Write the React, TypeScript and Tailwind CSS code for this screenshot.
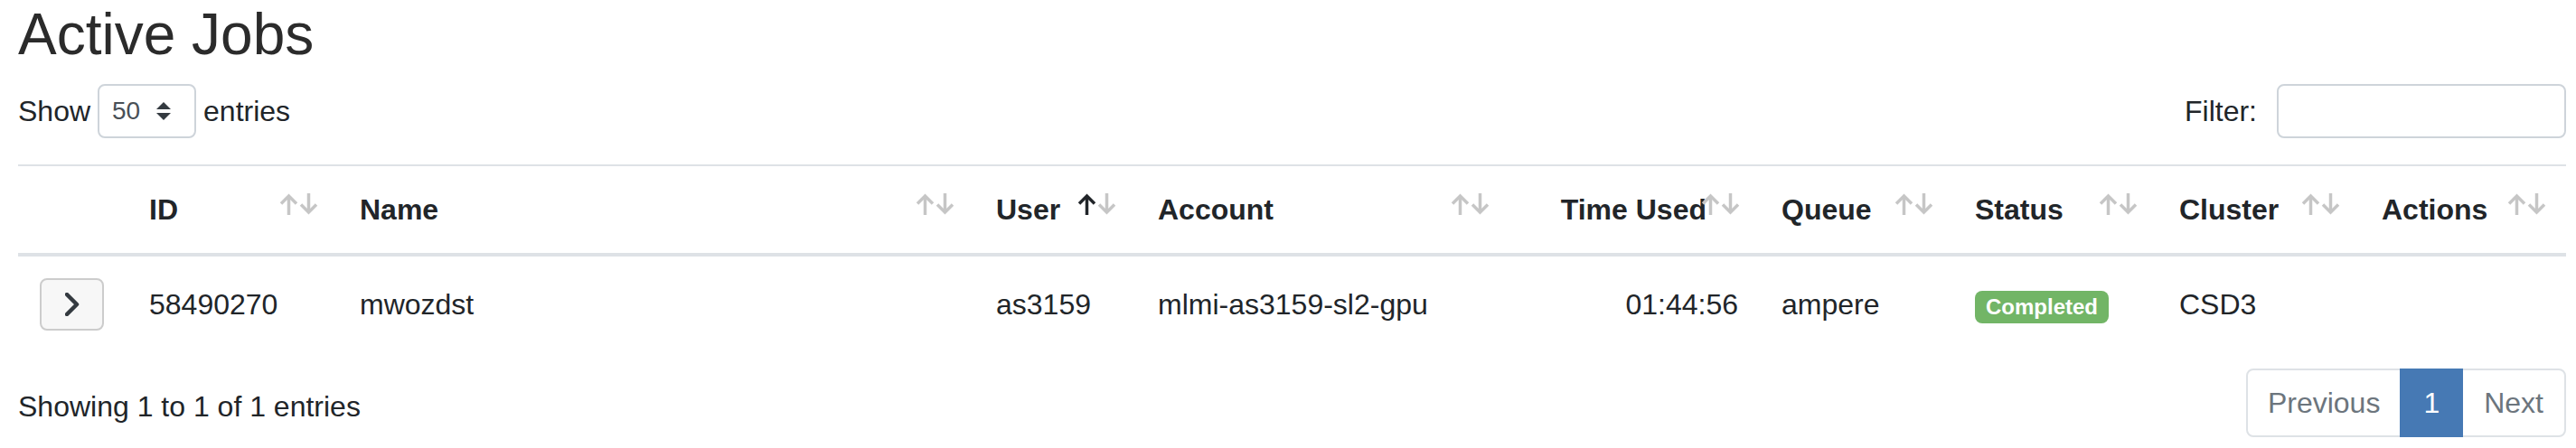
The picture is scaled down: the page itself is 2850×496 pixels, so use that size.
const COLUMNS = [
  { label: '', width: 'w-[121px]', sort: false },
  { label: 'ID', width: 'w-[233px]', sort: true },
  { label: 'Name', width: 'w-[704px]', sort: true },
  { label: 'User', width: 'w-[179px]', sort: true, active: true },
  { label: 'Account', width: 'w-[413px]', sort: true },
  { label: 'Time Used', width: 'w-[277px]', sort: true, right: true },
  { label: 'Queue', width: 'w-[214px]', sort: true },
  { label: 'Status', width: 'w-[226px]', sort: true },
  { label: 'Cluster', width: 'w-[224px]', sort: true },
  { label: 'Actions', width: 'w-[228px]', sort: true },
];

const Arrow = ({ up, dark }: { up?: boolean; dark?: boolean }) => (
  <svg width="21" height="24" viewBox="0 0 21 24" className={dark ? 'text-[#212529]' : 'text-[#c6c6c6]'}>
    {up ? (
      <g fill="none" stroke="currentColor" strokeWidth="3.5">
        <path d="M10.5 3.5 V24" />
        <path d="M2 11.5 L10.5 3 L19 11.5" />
      </g>
    ) : (
      <g fill="none" stroke="currentColor" strokeWidth="3.5">
        <path d="M10.5 0 V20.5" />
        <path d="M2 12.5 L10.5 21 L19 12.5" />
      </g>
    )}
  </svg>
);

const SortIcons = ({ active }: { active?: boolean }) => (
  <span className="absolute right-[22px] top-[30px] flex gap-[1px]">
    <Arrow up dark={active} />
    <Arrow />
  </span>
);

const ExpandButton = () => (
  <button className="flex h-[58px] w-[71px] items-center justify-center rounded-[8px] border-2 border-[#cccccc] bg-[#f7f7f7]">
    <svg width="16" height="26" viewBox="0 0 16 26">
      <path d="M2 2 L13 13 L2 24" fill="none" stroke="#343a40" strokeWidth="4.5" strokeLinecap="round" strokeLinejoin="round" />
    </svg>
  </button>
);

export default function App() {
  return (
    <div className="min-h-screen bg-white pl-[20px] pr-[11px] font-['Liberation_Sans',Arial,sans-serif] text-[32px] text-[#212529]">
      <h1 className="mb-[16px] text-[64px] leading-[77px] font-normal text-[#2b2b2b]">Active Jobs</h1>

      <div className="flex h-[60px] items-center justify-between">
        <div className="flex items-center leading-[48px]">
          <span>Show</span>
          <div className="mx-[8px] flex h-[60px] w-[109px] items-center rounded-[8px] border-2 border-[#ced4da] pl-[14px] text-[28px] text-[#495057]">
            <span>50</span>
            <svg width="16" height="20" viewBox="0 0 4 5" className="ml-[18px]">
              <path d="M2 0L0 2h4zm0 5L0 3h4z" fill="#343a40" />
            </svg>
          </div>
          <span>entries</span>
        </div>
        <label className="flex items-center leading-[48px]">
          <span>Filter:</span>
          <input className="ml-[22px] h-[60px] w-[320px] rounded-[8px] border-2 border-[#ced4da] outline-none" />
        </label>
      </div>

      <table className="mt-[29px] w-full table-fixed border-collapse">
        <colgroup>
          {COLUMNS.map((c, i) => (
            <col key={i} className={c.width} />
          ))}
        </colgroup>
        <thead>
          <tr>
            {COLUMNS.map((c, i) => (
              <th
                key={i}
                className={`relative border-t-2 border-b-4 border-[#dee2e6] py-[24px] pl-[24px] pr-[59px] leading-[48px] font-bold whitespace-nowrap ${c.right ? 'text-right' : 'text-left'}`}
              >
                {c.label}
                {c.sort && <SortIcons active={c.active} />}
              </th>
            ))}
          </tr>
        </thead>
        <tbody>
          <tr className="leading-[48px]">
            <td className="p-[24px] align-middle">
              <ExpandButton />
            </td>
            <td className="p-[24px] align-middle">58490270</td>
            <td className="p-[24px] align-middle">mwozdst</td>
            <td className="p-[24px] align-middle">as3159</td>
            <td className="p-[24px] align-middle whitespace-nowrap">mlmi-as3159-sl2-gpu</td>
            <td className="p-[24px] text-right align-middle">01:44:56</td>
            <td className="p-[24px] align-middle">ampere</td>
            <td className="p-[24px] align-middle">
              <span className="inline-block rounded-[8px] bg-[#72b566] px-[12px] py-[6px] align-middle text-[24px] leading-[24px] font-bold text-white">
                Completed
              </span>
            </td>
            <td className="p-[24px] align-middle">CSD3</td>
            <td className="p-[24px] align-middle"></td>
          </tr>
        </tbody>
      </table>

      <div className="mt-[18px] flex items-center justify-between">
        <div className="pt-[8px] leading-[48px]">Showing 1 to 1 of 1 entries</div>
        <ul className="flex leading-[40px]">
          <li className="rounded-l-[8px] border-2 border-[#dee2e6] px-[22px] py-[16px] text-[#6c757d]">Previous</li>
          <li className="relative z-10 -ml-[2px] border-2 border-[#4679b4] bg-[#4679b4] px-[24px] py-[16px] text-white">1</li>
          <li className="-ml-[2px] rounded-r-[8px] border-2 border-[#dee2e6] px-[23px] py-[16px] text-[#6c757d]">Next</li>
        </ul>
      </div>
    </div>
  );
}
